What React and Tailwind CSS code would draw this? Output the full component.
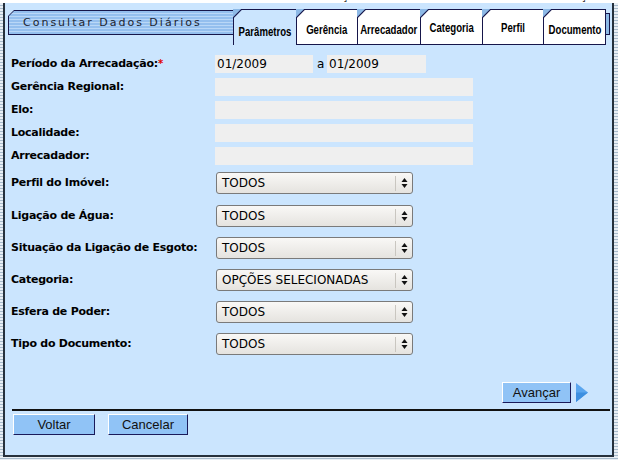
import React from "react";

const tabs = [
  { label: "Parâmetros", w: "w-[64px]", active: true, pt: "pt-[13px]" },
  { label: "Gerência", w: "w-[62px]", pt: "pt-[11px]" },
  { label: "Arrecadador", w: "w-[64px]", pt: "pt-[11px]" },
  { label: "Categoria", w: "w-[63px]", pt: "pt-[9px]" },
  { label: "Perfil", w: "w-[62px]", pt: "pt-[9px]" },
  { label: "Documento", w: "w-[63px]", pt: "pt-[11px]" },
];

const selects = [
  { label: "Perfil do Imóvel:", value: "TODOS", mt: "mt-[7px]" },
  { label: "Ligação de Água:", value: "TODOS", mt: "mt-[11px]" },
  { label: "Situação da Ligação de Esgoto:", value: "TODOS", mt: "mt-[10px]" },
  { label: "Categoria:", value: "OPÇÕES SELECIONADAS", mt: "mt-[10px]" },
  { label: "Esfera de Poder:", value: "TODOS", mt: "mt-[10px]" },
  { label: "Tipo do Documento:", value: "TODOS", mt: "mt-[10px]" },
];

function Fold() {
  return (
    <svg className="absolute -left-px -top-px" width="9" height="9" viewBox="0 0 9 9">
      <polygon points="0,0 9,0 0,9" fill="#8db9e6" />
      <line x1="0" y1="9" x2="9" y2="0" stroke="#16164a" strokeWidth="1.2" />
    </svg>
  );
}

function Tab({ label, w, active, pt }) {
  return (
    <div
      className={`relative -ml-px h-[36px] ${w} border border-[#16164a] ${
        active ? "bg-[#cbe5fe] border-b-0" : "bg-white"
      } ${pt} flex justify-center`}
    >
      <Fold />
      <span className="inline-block h-[16px] scale-x-[0.8] whitespace-nowrap text-[12px] font-bold text-black font-['Liberation_Sans',sans-serif]">
        {label}
      </span>
    </div>
  );
}

function Row({ label, children, mt = "" }) {
  return (
    <div className={`flex items-center ${mt}`}>
      <div className="w-[204px] text-[11px] font-bold tracking-[-0.25px] text-black">{label}</div>
      {children}
    </div>
  );
}

function Field({ w = "w-[258px]", value = "" }) {
  return (
    <div className={`${w} h-[18px] bg-[#efefef] pl-[2px] text-[12px] leading-[18px] text-black`}>
      {value}
    </div>
  );
}

function Select({ value }) {
  return (
    <div className="ml-px w-[197px] h-[22px] rounded-[3px] border border-[#7a7a7a] bg-gradient-to-b from-[#f9f8f6] to-[#e5e3df] flex items-center">
      <span className="flex-1 pl-[5px] text-[12px] text-black">{value}</span>
      <span className="w-px h-[15px] bg-[#c9c6c0]" />
      <span className="w-[16px] flex justify-center">
        <svg width="7" height="12" viewBox="0 0 7 12">
          <polygon points="3.5,1 6.5,5 0.5,5" fill="#111" />
          <polygon points="0.5,7 6.5,7 3.5,11" fill="#111" />
        </svg>
      </span>
    </div>
  );
}

function Btn({ children, w }) {
  return (
    <button
      className={`${w} h-[21px] bg-[#90c3f6] border border-t-white border-l-white border-b-[#1a1a5a] border-r-[#1a1a5a] text-[13px] text-[#111] leading-none font-['Liberation_Sans',sans-serif]`}
    >
      {children}
    </button>
  );
}

export default function App() {
  return (
    <div className="w-[618px] h-[460px] overflow-hidden bg-[repeating-linear-gradient(to_bottom,#e8eef4_0_2px,#a8bbcc_2px_3px)] font-['DejaVu_Sans',sans-serif]">
      {/* breadcrumb strip, mostly cut off */}
      <div className="h-[3px] bg-white overflow-hidden flex justify-end pr-[18px]">
        <div className="-mt-[9px] text-[11px] leading-[12px] text-[#222] whitespace-nowrap">
          Gsan &gt; Arrecadação &gt; Consultar Dados Diários da Arrecadação
        </div>
      </div>

      <div className="ml-[3px] w-[611px] h-[454px] bg-[#cbe5fe] border-l-2 border-r-2 border-b-2 border-[#25303c] pt-[6px]">
        {/* header: title + tabs */}
        <div className="flex items-start pl-[3px]">
          <div className="mt-px w-[226px] h-[25px] bg-[#16164a] [clip-path:polygon(6px_0,100%_0,100%_100%,0_100%,0_6px)] p-px">
            <div className="h-full bg-[repeating-linear-gradient(to_bottom,#94bfee_0_2px,#b9d7f7_2px_3px)] [clip-path:polygon(5px_0,100%_0,100%_100%,0_100%,0_5px)] pl-[14px] pt-[4px] text-[11px] tracking-[2px] text-[#1c2430]">
              Consultar Dados Diários
            </div>
          </div>
          <div className="flex">
            {tabs.map((t) => (
              <Tab key={t.label} {...t} />
            ))}
            <div className="mt-[4px] w-[4px] h-[22px] bg-[#8db9e6] border border-l-0 border-[#16164a]" />
          </div>
        </div>

        {/* form */}
        <div className="pl-[6px] mt-[10px]">
          <Row label={<>Período da Arrecadação:<span className="text-[#e00000] align-top text-[10px]">*</span></>}>
            <Field w="w-[98px]" value="01/2009" />
            <span className="w-[14px] pl-[4px] text-[12px] text-black">a</span>
            <Field w="w-[99px]" value="01/2009" />
          </Row>
          <Row label="Gerência Regional:" mt="mt-[5px]">
            <Field />
          </Row>
          <Row label="Elo:" mt="mt-[5px]">
            <Field />
          </Row>
          <Row label="Localidade:" mt="mt-[5px]">
            <Field />
          </Row>
          <Row label="Arrecadador:" mt="mt-[5px]">
            <Field />
          </Row>
          {selects.map((s) => (
            <Row key={s.label} label={s.label} mt={s.mt}>
              <Select value={s.value} />
            </Row>
          ))}
        </div>

        {/* next */}
        <div className="mt-[27px] flex items-center justify-end pr-[24px]">
          <Btn w="w-[69px]">Avançar</Btn>
          <svg className="ml-[5px]" width="12" height="19" viewBox="0 0 12 19">
            <polygon points="0,0 12,9.5 0,19" fill="#5aa6ef" />
            <polygon points="0,9.5 12,9.5 0,19" fill="#3d8fe0" />
          </svg>
        </div>

        <div className="mt-[6px] ml-[7px] w-[598px] h-[2px] bg-[#111]" />

        <div className="mt-[3px] ml-[8px] flex gap-[13px]">
          <Btn w="w-[82px]">Voltar</Btn>
          <Btn w="w-[80px]">Cancelar</Btn>
        </div>
      </div>
    </div>
  );
}
